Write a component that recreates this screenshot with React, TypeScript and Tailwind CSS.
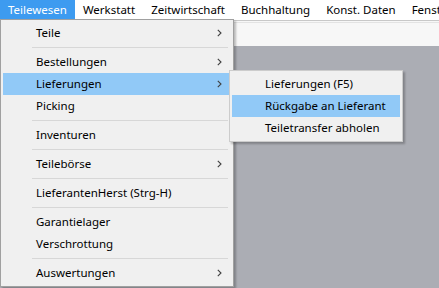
import { ReactNode } from "react";

const menuBar = ["Teilewesen", "Werkstatt", "Zeitwirtschaft", "Buchhaltung", "Konst. Daten", "Fenster"];

type Entry = { label: string; sub?: boolean; active?: boolean } | "sep";

const mainItems: Entry[] = [
  { label: "Teile", sub: true },
  "sep",
  { label: "Bestellungen", sub: true },
  { label: "Lieferungen", sub: true, active: true },
  { label: "Picking" },
  "sep",
  { label: "Inventuren" },
  "sep",
  { label: "Teilebörse", sub: true },
  "sep",
  { label: "LieferantenHerst (Strg-H)" },
  "sep",
  { label: "Garantielager" },
  { label: "Verschrottung" },
  "sep",
  { label: "Auswertungen", sub: true },
];

const subItems: Entry[] = [
  { label: "Lieferungen (F5)" },
  { label: "Rückgabe an Lieferant", active: true },
  { label: "Teiletransfer abholen" },
];

function Chevron() {
  return (
    <svg width="5" height="8" viewBox="0 0 5 8" className="text-[#404040]">
      <path d="M0.8 0.8 L4 4 L0.8 7.2" fill="none" stroke="currentColor" strokeWidth="1.1" />
    </svg>
  );
}

function MenuList({ items }: { items: Entry[] }) {
  return (
    <div className="flex flex-col">
      {items.map((it, i) =>
        it === "sep" ? (
          <div key={i} className="h-[7px] flex items-center pl-[29px] pr-[3px]">
            <div className="h-px w-full bg-[#d7d7d7]" />
          </div>
        ) : (
          <div
            key={i}
            className={
              "h-[22px] flex items-center justify-between whitespace-nowrap pl-[33px] pr-[9px] " +
              (it.active ? "bg-[#91c9f7]" : "")
            }
          >
            <span>{it.label}</span>
            {it.sub ? <Chevron /> : null}
          </div>
        )
      )}
    </div>
  );
}

function Popup({ className, children }: { className: string; children: ReactNode }) {
  return (
    <div
      className={
        "absolute bg-[#f0f0f0] border border-[#a0a0a0] p-[2px] shadow-[2px_2px_2px_rgba(0,0,0,0.25)] " + className
      }
    >
      {children}
    </div>
  );
}

export default function App() {
  return (
    <div
      className="relative w-[439px] h-[288px] overflow-hidden bg-[#abadb4] text-[11.5px] text-black"
      style={{ fontFamily: '"Noto Sans", "Open Sans", sans-serif' }}
    >
      <div className="h-[20px] bg-white flex items-stretch">
        {menuBar.map((m, i) => (
          <div
            key={m}
            className={
              "px-[8px] flex items-center whitespace-nowrap " + (i === 0 ? "bg-[#3d9bf0] text-white" : "")
            }
          >
            {m}
          </div>
        ))}
      </div>
      <div className="h-[26px] bg-[#f7f7f7] border-t border-[#c8c8c8]">
        <div className="h-px mt-[1px] bg-[#e3e3e3]" />
      </div>

      <Popup className="left-0 top-[19px] w-[234px] h-[268px]">
        <MenuList items={mainItems} />
      </Popup>

      <Popup className="left-[229px] top-[70px] w-[174px] border-[#cccccc]">
        <MenuList items={subItems} />
      </Popup>
    </div>
  );
}
